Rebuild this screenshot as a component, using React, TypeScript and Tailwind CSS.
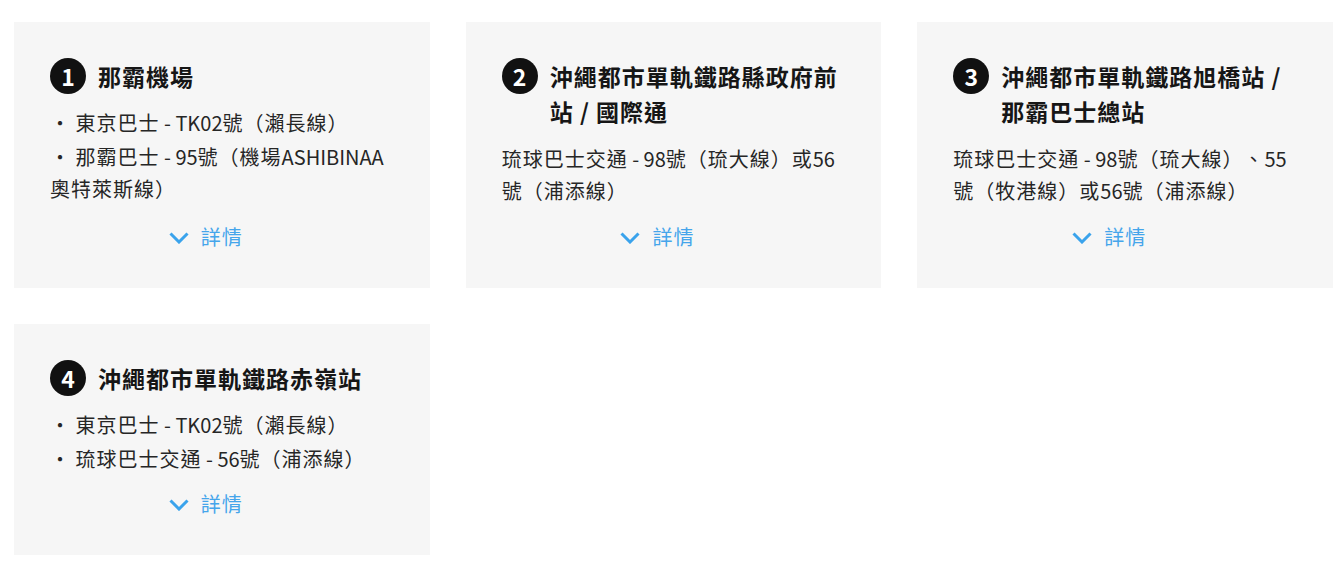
import React from "react";

type Card = {
  n: number;
  title: string;
  lines?: string[];
  text?: string;
};

const cards: Card[] = [
  { n: 1, title: "那霸機場", lines: ["・ 東京巴士 - TK02號（瀨長線）", "・ 那霸巴士 - 95號（機場ASHIBINAA奧特萊斯線）"] },
  { n: 2, title: "沖繩都市單軌鐵路縣政府前站 / 國際通", text: "琉球巴士交通 - 98號（琉大線）或56號（浦添線）" },
  { n: 3, title: "沖繩都市單軌鐵路旭橋站 / 那霸巴士總站", text: "琉球巴士交通 - 98號（琉大線）、55號（牧港線）或56號（浦添線）" },
  { n: 4, title: "沖繩都市單軌鐵路赤嶺站", lines: ["・ 東京巴士 - TK02號（瀨長線）", "・ 琉球巴士交通 - 56號（浦添線）"] },
];

function Mixed({ s }: { s: string }) {
  const parts = s.split(/([A-Za-z0-9 \-\/]+)/);
  return (
    <>
      {parts.map((p, i) =>
        i % 2 === 1 ? (
          <span key={i} className="tracking-normal">
            {p}
          </span>
        ) : (
          <React.Fragment key={i}>{p}</React.Fragment>
        )
      )}
    </>
  );
}

function CardView({ c }: { c: Card }) {
  return (
    <div className="flex flex-col bg-[#f6f6f6] p-[36px]">
      <div className="flex items-start gap-[12px]">
        <div className="flex h-[36px] w-[36px] shrink-0 items-center justify-center rounded-full bg-[#111111] text-[23px] font-bold leading-none text-white">
          {c.n}
        </div>
        <h3 className="pt-[1px] text-[23px] font-bold leading-[35px] tracking-[1px] text-[#161616]">{c.title}</h3>
      </div>
      {c.lines ? (
        <ul className="mt-[13px] text-[20px] leading-[32px] tracking-[1px] text-[#262626]">
          {c.lines.map((l, i) => (
            <li key={i} className="mb-[2px]">
              <Mixed s={l} />
            </li>
          ))}
        </ul>
      ) : (
        <p className="mt-[14px] text-[20px] leading-[32px] tracking-[1px] text-[#262626]">
          <Mixed s={c.text || ""} />
        </p>
      )}
      <div className={c.lines ? "mt-auto flex justify-center pt-[12px]" : "mt-auto flex justify-center pt-[15px]"}>
        <span className="relative text-[20px] leading-[30px] tracking-[1px] text-[#45a5eb]">
          <svg
            className="absolute right-full top-[10px] mr-[12px]"
            width="20"
            height="12"
            viewBox="0 0 20 12"
            fill="none"
            stroke="#3aa3ec"
            strokeWidth="3"
            strokeLinecap="butt"
            strokeLinejoin="miter"
          >
            <polyline points="1.5,1.5 10,10 18.5,1.5" />
          </svg>
          詳情
        </span>
      </div>
    </div>
  );
}

export default function App() {
  return (
    <div
      className="min-h-[567px] bg-white pl-[14px] pt-[22px] [text-spacing-trim:space-all]"
      style={{ fontFamily: '"Noto Sans CJK TC", "Noto Sans", sans-serif' }}
    >
      <div className="grid w-[1319px] grid-cols-3 gap-[36px]">
        {cards.map((c) => (
          <CardView key={c.n} c={c} />
        ))}
      </div>
    </div>
  );
}
